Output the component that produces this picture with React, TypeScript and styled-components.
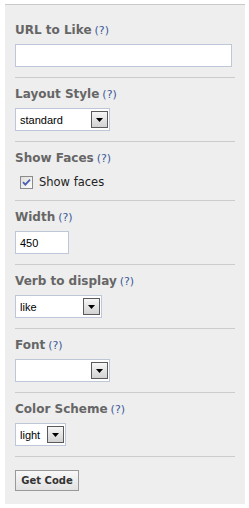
import React from "react";
import styled, { createGlobalStyle } from "styled-components";

const GlobalStyle = createGlobalStyle`
  html, body {
    margin: 0;
    padding: 0;
    background: #ffffff;
  }
  body {
    font-family: "DejaVu Sans", Verdana, sans-serif;
  }
`;

const Panel = styled.div`
  box-sizing: border-box;
  margin: 4px 0 0 5px;
  width: 240px;
  height: 500px;
  padding: 9px 10px 0;
  background: #eeeeee;
  border-top: 1px solid #c9c9c9;
`;

const Section = styled.div<{ $last?: boolean }>`
  display: flex;
  flex-direction: column;
  align-items: flex-start;
  padding: ${(p) => (p.$last ? "13px 0 0" : "8px 0 10px")};
  border-bottom: ${(p) => (p.$last ? "none" : "1px solid #cccccc")};
`;

const Label = styled.div`
  display: flex;
  align-items: baseline;
  height: 16px;
  font-family: "DejaVu Sans", Verdana, sans-serif;
  font-weight: bold;
  font-size: 12px;
  line-height: 16px;
  color: #666666;
  margin-bottom: 6px;
  white-space: nowrap;
`;

const Help = styled.span`
  font-weight: normal;
  font-size: 11px;
  line-height: 16px;
  color: #3b5998;
  margin-left: 3px;
`;

const TextInput = styled.div<{ $width: number }>`
  box-sizing: border-box;
  width: ${(p) => p.$width}px;
  height: 23px;
  border: 1px solid #bdc7d8;
  background: #ffffff;
  padding: 0 4px;
  display: flex;
  align-items: center;
  font-family: "Liberation Sans", Arial, sans-serif;
  font-size: 11px;
  color: #000000;
`;

const SelectBox = styled.div<{ $width: number }>`
  box-sizing: border-box;
  width: ${(p) => p.$width}px;
  height: 23px;
  border: 1px solid #bdc7d8;
  background: #ffffff;
  padding: 2px 1px 2px 4px;
  display: flex;
  align-items: center;
  justify-content: space-between;
  font-family: "Liberation Sans", Arial, sans-serif;
  font-size: 11px;
  color: #000000;
`;

const SelectValue = styled.span`
  flex: 1;
  white-space: nowrap;
`;

const ArrowButton = styled.div`
  box-sizing: border-box;
  width: 17px;
  height: 17px;
  border: 1px solid #5a5a5a;
  background: linear-gradient(#f6f6f6, #d2d2d2);
  display: flex;
  align-items: center;
  justify-content: center;
  flex-shrink: 0;
`;

const CheckRow = styled.label`
  display: flex;
  align-items: center;
  height: 16px;
  margin-top: 2px;
  padding-left: 5px;
  font-family: "DejaVu Sans", Verdana, sans-serif;
  font-size: 11.5px;
  color: #222222;
  gap: 6px;
`;

const Button = styled.button`
  box-sizing: border-box;
  height: 21px;
  width: 64px;
  padding: 0;
  border: 1px solid #999999;
  background: linear-gradient(#f8f8f8, #e2e2e2);
  font-family: "DejaVu Sans", Verdana, sans-serif;
  font-weight: bold;
  font-size: 10px;
  color: #333333;
  cursor: pointer;
`;

function Arrow() {
  return (
    <ArrowButton>
      <svg width="7" height="4" viewBox="0 0 7 4">
        <path d="M0 0H7L3.5 4Z" fill="#000" />
      </svg>
    </ArrowButton>
  );
}

function Select({ value, width }: { value: string; width: number }) {
  return (
    <SelectBox $width={width}>
      <SelectValue>{value}</SelectValue>
      <Arrow />
    </SelectBox>
  );
}

function Checkbox() {
  return (
    <svg width="13" height="13" viewBox="0 0 13 13">
      <defs>
        <linearGradient id="cbg" x1="0" y1="0" x2="1" y2="1">
          <stop offset="0" stopColor="#dcdcd7" />
          <stop offset="1" stopColor="#ffffff" />
        </linearGradient>
      </defs>
      <rect x="0.5" y="0.5" width="12" height="12" fill="url(#cbg)" stroke="#8b8b8b" />
      <path d="M3 6.2L5.3 8.6L10 3.6" fill="none" stroke="#4a5fb0" strokeWidth="1.8" />
    </svg>
  );
}

function FieldLabel({ text }: { text: string }) {
  return (
    <Label>
      {text}
      <Help>(?)</Help>
    </Label>
  );
}

export default function App() {
  return (
    <>
      <GlobalStyle />
      <Panel>
        <Section>
          <FieldLabel text="URL to Like" />
          <TextInput $width={217} />
        </Section>
        <Section>
          <FieldLabel text="Layout Style" />
          <Select value="standard" width={95} />
        </Section>
        <Section>
          <FieldLabel text="Show Faces" />
          <CheckRow>
            <Checkbox />
            Show faces
          </CheckRow>
        </Section>
        <Section>
          <FieldLabel text="Width" />
          <TextInput $width={54}>450</TextInput>
        </Section>
        <Section>
          <FieldLabel text="Verb to display" />
          <Select value="like" width={87} />
        </Section>
        <Section>
          <FieldLabel text="Font" />
          <Select value="" width={95} />
        </Section>
        <Section>
          <FieldLabel text="Color Scheme" />
          <Select value="light" width={51} />
        </Section>
        <Section $last>
          <Button>Get Code</Button>
        </Section>
      </Panel>
    </>
  );
}
